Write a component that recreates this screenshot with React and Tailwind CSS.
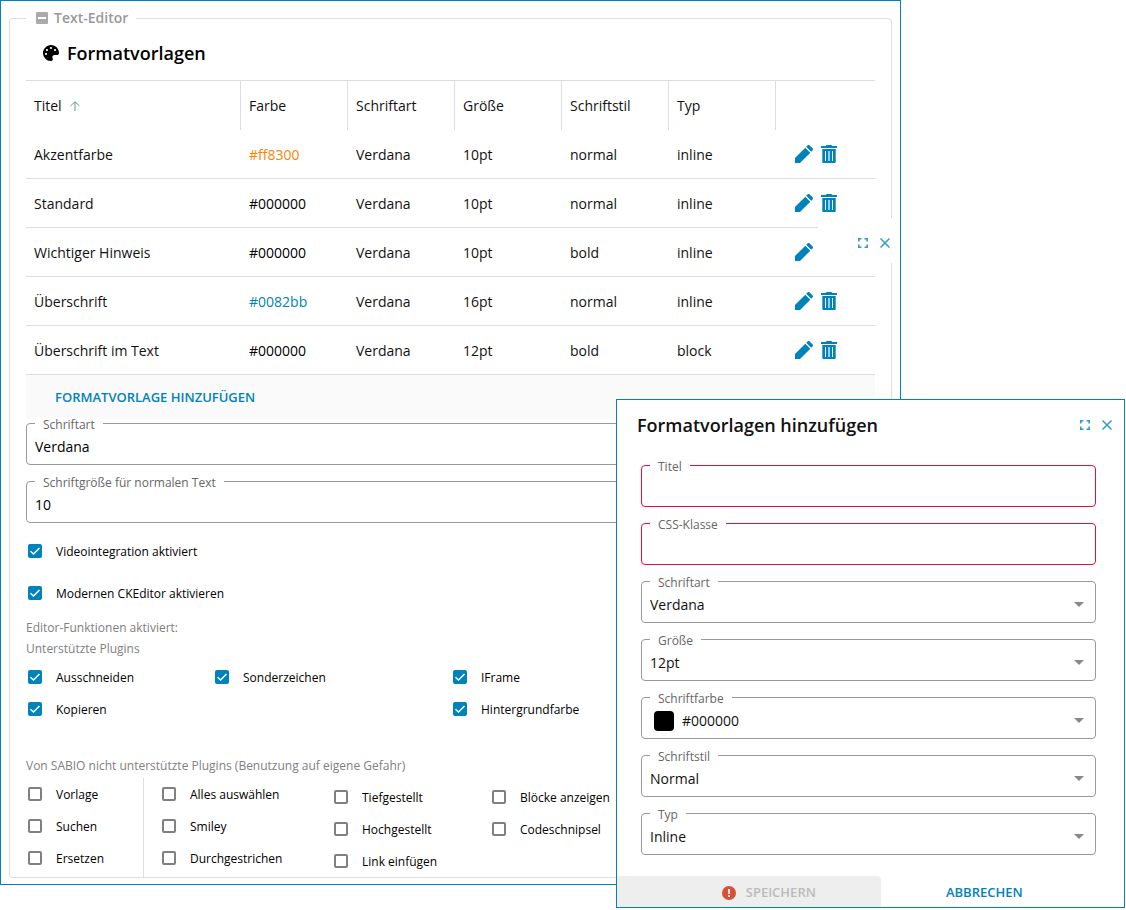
import { useState } from "react";
import { FaPalette } from "react-icons/fa";

const styles = [
  { title: "Akzentfarbe", color: "#ff8300", font: "Verdana", size: "10pt", style: "normal", type: "inline", deletable: true },
  { title: "Standard", color: "#000000", font: "Verdana", size: "10pt", style: "normal", type: "inline", deletable: true },
  { title: "Wichtiger Hinweis", color: "#000000", font: "Verdana", size: "10pt", style: "bold", type: "inline", deletable: false },
  { title: "Überschrift", color: "#0082bb", font: "Verdana", size: "16pt", style: "normal", type: "inline", deletable: true },
  { title: "Überschrift im Text", color: "#000000", font: "Verdana", size: "12pt", style: "bold", type: "block", deletable: true },
];

const columns = ["Farbe", "Schriftart", "Größe", "Schriftstil", "Typ"];

const PencilIcon = () => (
  <svg viewBox="0 0 18 18" width="18" height="18" fill="currentColor">
    <path d="M0 18v-5L10.3 2.7l5 5L5 18z" />
    <path d="M11.2 1.8l1.3-1.3c.6-.6 1.600-.6 2.200 0l2.800 2.800c.6.6.6 1.600 0 2.200l-1.300 1.300z" />
  </svg>
);

const TrashIcon = () => (
  <svg viewBox="0 0 16 18" width="16" height="18" fill="currentColor">
    <path d="M5.500 0h5l.7 1H16v2H0V1h4.800z" />
    <path
      fillRule="evenodd"
      d="M1.300 4h13.400v13a1 1 0 0 1-1 1H2.300a1 1 0 0 1-1-1zM4 6v10h1V6zm3.400 0v10h1.200V6zM11 6v10h1V6z"
    />
  </svg>
);

const WindowButtons = () => (
  <div className="flex items-center gap-3 text-[#339bc9]">
    <button aria-label="Vollbild">
      <svg viewBox="0 0 10 10" width="10" height="10" fill="none" stroke="currentColor" strokeWidth="1.6">
        <path d="M.8 3.500V.8h2.700M6.500.8h2.700v2.700M9.200 6.500v2.700H6.500M3.500 9.200H.8V6.500" />
      </svg>
    </button>
    <button aria-label="Schließen">
      <svg viewBox="0 0 10 10" width="10" height="10" fill="none" stroke="currentColor" strokeWidth="1.5">
        <path d="M.5.5l9 9M9.500.5l-9 9" />
      </svg>
    </button>
  </div>
);

const FieldLabel = ({ id, children }) => (
  <label
    htmlFor={id}
    className="absolute -top-1.5 left-[9px] px-2 bg-white text-xs leading-4 text-[#666]"
  >
    {children}
  </label>
);

const TextField = ({ id, label, value = "", invalid = false }) => (
  <div className="relative">
    <input
      id={id}
      type="text"
      defaultValue={value}
      className={`block w-full h-[42px] pl-2 pt-1 rounded border text-sm outline-none ${
        invalid ? "border-[#d9123e]" : "border-[#999]"
      }`}
    />
    <FieldLabel id={id}>{label}</FieldLabel>
  </div>
);

const SelectField = ({ id, label, value, swatch = false }) => (
  <div className="relative">
    <select
      id={id}
      defaultValue={value}
      className={`block w-full h-[42px] pt-1.5 pr-8 rounded border border-[#999] bg-white text-sm appearance-none outline-none ${
        swatch ? "pl-10" : "pl-2"
      }`}
    >
      <option>{value}</option>
    </select>
    {swatch && (
      <span className="absolute left-[13px] top-3.5 w-5 h-5 rounded bg-black" />
    )}
    <svg
      viewBox="0 0 10 5"
      width="10"
      height="5"
      className="absolute right-3 top-[21px] pointer-events-none fill-[#888]"
    >
      <path d="M0 0h10L5 5z" />
    </svg>
    <FieldLabel id={id}>{label}</FieldLabel>
  </div>
);

const Checkbox = ({ label, checked = false }) => {
  const [on, setOn] = useState(checked);

  return (
    <label className="flex items-center h-8 pl-0.5 gap-3.5 text-xs">
      <span className="relative w-3.5 h-3.5 shrink-0">
        <input
          type="checkbox"
          checked={on}
          onChange={(e) => setOn(e.target.checked)}
          className="block w-3.5 h-3.5 appearance-none rounded-xs border-2 border-[#808080] checked:border-[#0082bb] checked:bg-[#0082bb]"
        />
        {on && (
          <svg
            viewBox="0 0 14 14"
            width="14"
            height="14"
            fill="none"
            stroke="white"
            strokeWidth="1.5"
            className="absolute inset-0 pointer-events-none"
          >
            <path d="M2.500 7.200l3 2.800 6-6" />
          </svg>
        )}
      </span>
      <span className="pt-0.5">{label}</span>
    </label>
  );
};

const StyleTable = () => (
  <table className="w-full table-fixed border-separate border-spacing-0 text-sm text-[#111] border-t border-[#ddd]">
    <thead>
      <tr className="h-[49px] text-left">
        <th className="w-[215px] pl-2 font-normal border-r border-[#ddd]">
          <span className="flex items-center gap-2">
            Titel
            <svg viewBox="0 0 10 10" width="10" height="10" fill="none" stroke="#5f9c80">
              <path d="M5 10V.8M.5 5 5 .8 9.500 5" />
            </svg>
          </span>
        </th>
        {columns.map((column) => (
          <th
            key={column}
            className="w-[107px] pl-2 font-normal border-r border-[#ddd]"
          >
            {column}
          </th>
        ))}
        <th aria-label="Aktionen" />
      </tr>
    </thead>
    <tbody>
      {styles.map((row) => (
        <tr
          key={row.title}
          className="h-[49px] [&>td]:border-b [&>td]:border-[#ddd]"
        >
          <td className="pl-2 pt-0.5">{row.title}</td>
          <td className="pl-2 pt-0.5" style={{ color: row.color }}>
            {row.color}
          </td>
          <td className="pl-2 pt-0.5">{row.font}</td>
          <td className="pl-2 pt-0.5">{row.size}</td>
          <td className="pl-2 pt-0.5">{row.style}</td>
          <td className="pl-2 pt-0.5">{row.type}</td>
          <td className="pl-[19px]">
            <div className="flex gap-2 text-[#0082bb]">
              <button aria-label={`${row.title} bearbeiten`}>
                <PencilIcon />
              </button>
              {row.deletable && (
                <button aria-label={`${row.title} löschen`}>
                  <TrashIcon />
                </button>
              )}
            </div>
          </td>
        </tr>
      ))}
    </tbody>
  </table>
);

const EditorSettings = () => (
  <main className="relative w-4/5 p-2 pb-1.5 border border-[#0082bb]">
    <fieldset className="px-4 min-w-0 rounded border border-[#ddd]">
      <legend className="pl-2.5 pr-2 text-sm leading-[18px] font-semibold text-[#999]">
        <button className="flex items-center gap-1.5">
          <svg viewBox="0 0 12 12" width="12" height="12">
            <rect width="12" height="12" rx="1" fill="#aaa" />
            <path d="M2 5h8v2H2z" fill="white" />
          </svg>
          Text-Editor
        </button>
      </legend>

      <h1 className="flex items-center gap-2 h-[53px] pl-[17px] pb-0.5 text-lg font-semibold">
        <FaPalette size={16} />
        Formatvorlagen
      </h1>

      <StyleTable />

      <div className="h-11 pl-[29px] pt-0.5 flex items-center bg-[#fafafa]">
        <button className="text-[13px] font-semibold text-[#0082bb]">
          FORMATVORLAGE HINZUFÜGEN
        </button>
      </div>

      <div className="flex flex-col gap-4 pt-1">
        <TextField id="editor-font" label="Schriftart" value="Verdana" />
        <TextField id="editor-size" label="Schriftgröße für normalen Text" value="10" />
      </div>

      <div className="flex flex-col gap-2.5 pt-3">
        <Checkbox label="Videointegration aktiviert" checked />
        <Checkbox label="Modernen CKEditor aktivieren" checked />
      </div>

      <div className="pt-2 text-xs leading-[21px] text-[#808080]">
        <p>Editor-Funktionen aktiviert:</p>
        <p>Unterstützte Plugins</p>
      </div>
      <div className="flex pt-0.5">
        <div className="w-[187px]">
          <Checkbox label="Ausschneiden" checked />
          <Checkbox label="Kopieren" checked />
        </div>
        <div className="w-[238px]">
          <Checkbox label="Sonderzeichen" checked />
        </div>
        <div>
          <Checkbox label="IFrame" checked />
          <Checkbox label="Hintergrundfarbe" checked />
        </div>
      </div>

      <p className="pt-[30px] text-xs leading-[21px] text-[#808080]">
        Von SABIO nicht unterstützte Plugins (Benutzung auf eigene Gefahr)
      </p>
      <div className="flex pt-0.5">
        <div className="w-[118px] border-r border-[#ddd]">
          <Checkbox label="Vorlage" />
          <Checkbox label="Suchen" />
          <Checkbox label="Ersetzen" />
        </div>
        <div className="w-[188px] pl-4">
          <Checkbox label="Alles auswählen" />
          <Checkbox label="Smiley" />
          <Checkbox label="Durchgestrichen" />
        </div>
        <div className="w-[158px] pt-[3px]">
          <Checkbox label="Tiefgestellt" />
          <Checkbox label="Hochgestellt" />
          <Checkbox label="Link einfügen" />
        </div>
        <div className="pt-[3px]">
          <Checkbox label="Blöcke anzeigen" />
          <Checkbox label="Codeschnipsel" />
        </div>
      </div>
    </fieldset>

    <div className="absolute right-0 top-[217px] flex items-center h-[45px] pl-10 pr-2.5 pt-1 bg-white">
      <WindowButtons />
    </div>
  </main>
);

const AddStyleDialog = () => (
  <section
    role="dialog"
    aria-labelledby="dialog-title"
    className="absolute top-[399px] right-px w-[509px] border border-[#0082bb] bg-white"
  >
    <header className="flex items-center justify-between h-[50px] pl-5 pr-3">
      <h2 id="dialog-title" className="text-lg font-semibold text-[#111]">
        Formatvorlagen hinzufügen
      </h2>
      <WindowButtons />
    </header>
    <form className="flex flex-col gap-4 pt-[15px] pl-6 pr-7 text-[#111]">
      <TextField id="title" label="Titel" invalid />
      <TextField id="css-class" label="CSS-Klasse" invalid />
      <SelectField id="font" label="Schriftart" value="Verdana" />
      <SelectField id="size" label="Größe" value="12pt" />
      <SelectField id="color" label="Schriftfarbe" value="#000000" swatch />
      <SelectField id="style" label="Schriftstil" value="Normal" />
      <SelectField id="type" label="Typ" value="Inline" />
    </form>
    <footer className="flex h-[31px] mt-[21px] text-[13px] font-semibold">
      <button
        disabled
        className="flex items-center justify-center gap-2.5 w-[52%] pl-10 pt-0.5 rounded-tr bg-[#eee] text-[#bbb]"
      >
        <svg viewBox="0 0 14 14" width="14" height="14">
          <circle cx="7" cy="7" r="7" fill="#d94f38" />
          <path d="M6 3h2l-.3 5H6.300zM6 9.200h2v1.800H6z" fill="white" />
        </svg>
        SPEICHERN
      </button>
      <button className="flex-1 pr-9 pt-0.5 text-[#0082bb]">ABBRECHEN</button>
    </footer>
  </section>
);

const App = () => (
  <div className="relative min-h-screen bg-white font-['Open_Sans',sans-serif] text-black">
    <EditorSettings />
    <AddStyleDialog />
  </div>
);

export default App;
